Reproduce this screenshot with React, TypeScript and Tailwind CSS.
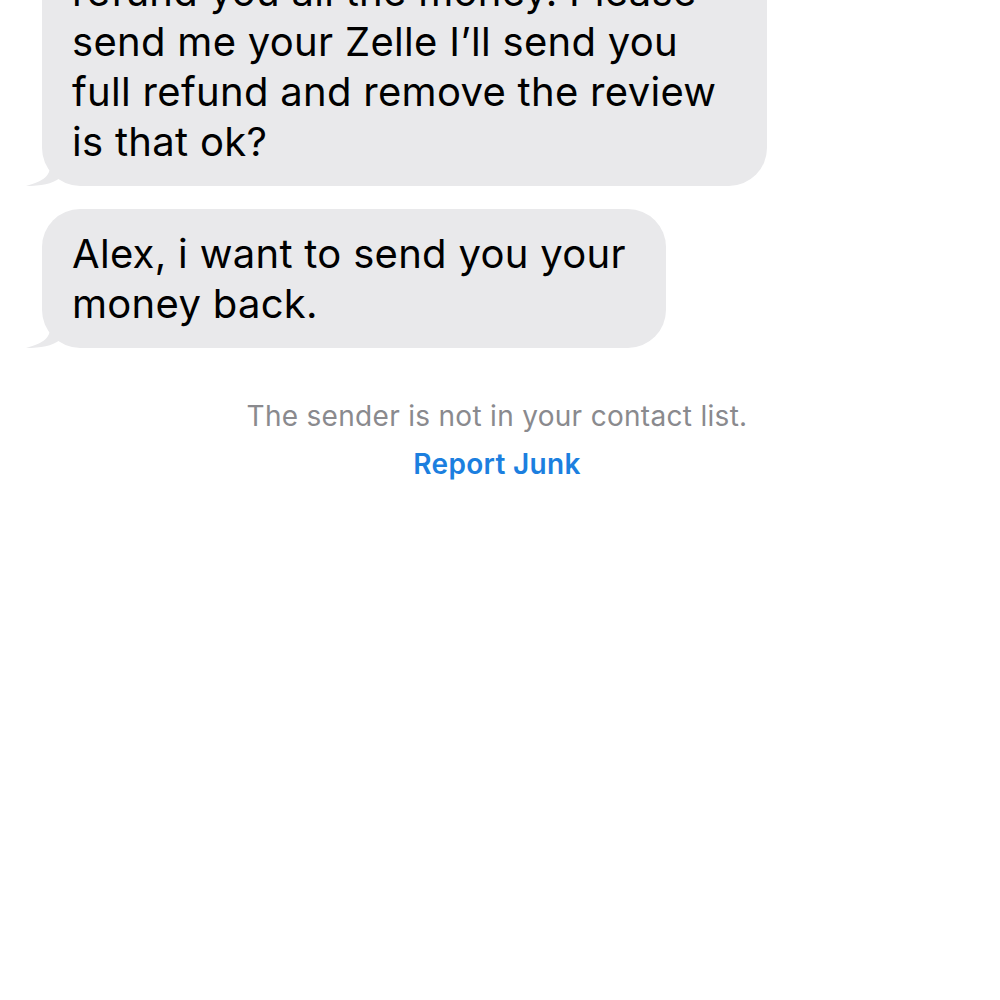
const font = { fontFamily: "Inter, 'Liberation Sans', sans-serif" };

function Tail() {
  return (
    <svg
      className="absolute bottom-0 left-[-16px]"
      width="42"
      height="38"
      viewBox="0 0 42 38"
    >
      <path
        d="M24 0 L24 18 C24 27 19 33 0 38 C15 38 26 36 34 30 L42 26 L42 0 Z"
        fill="#e9e9eb"
      />
    </svg>
  );
}

function Bubble({ width, children }: { width: string; children: React.ReactNode }) {
  return (
    <div className={`relative ${width}`}>
      <Tail />
      <div className="relative rounded-[38px] bg-[#e9e9eb] pt-[20px] pb-[19px] pl-[30px] pr-[20px] text-[40px] leading-[50px] tracking-[0.3px] text-black">
        {children}
      </div>
    </div>
  );
}

export default function App() {
  return (
    <div className="h-[1000px] w-[1000px] overflow-hidden bg-white" style={font}>
      <div className="mt-[-53px] flex flex-col gap-[23px] pl-[42px]">
        <Bubble width="w-[725px]">
          refund you all the money. Please
          <br />
          send me your Zelle I’ll send you
          <br />
          full refund and remove the review
          <br />
          is that ok?
        </Bubble>
        <Bubble width="w-[624px]">
          Alex, i want to send you your
          <br />
          money back.
        </Bubble>
      </div>
      <div className="mt-[52px] flex flex-col items-center gap-[16px] pr-[6px]">
        <p className="text-[28px] leading-[32px] tracking-[0.3px] text-[#8a8a8e]">
          The sender is not in your contact list.
        </p>
        <p className="text-[28px] font-semibold leading-[32px] tracking-[0.3px] text-[#1c7fdf]">
          Report Junk
        </p>
      </div>
    </div>
  );
}
